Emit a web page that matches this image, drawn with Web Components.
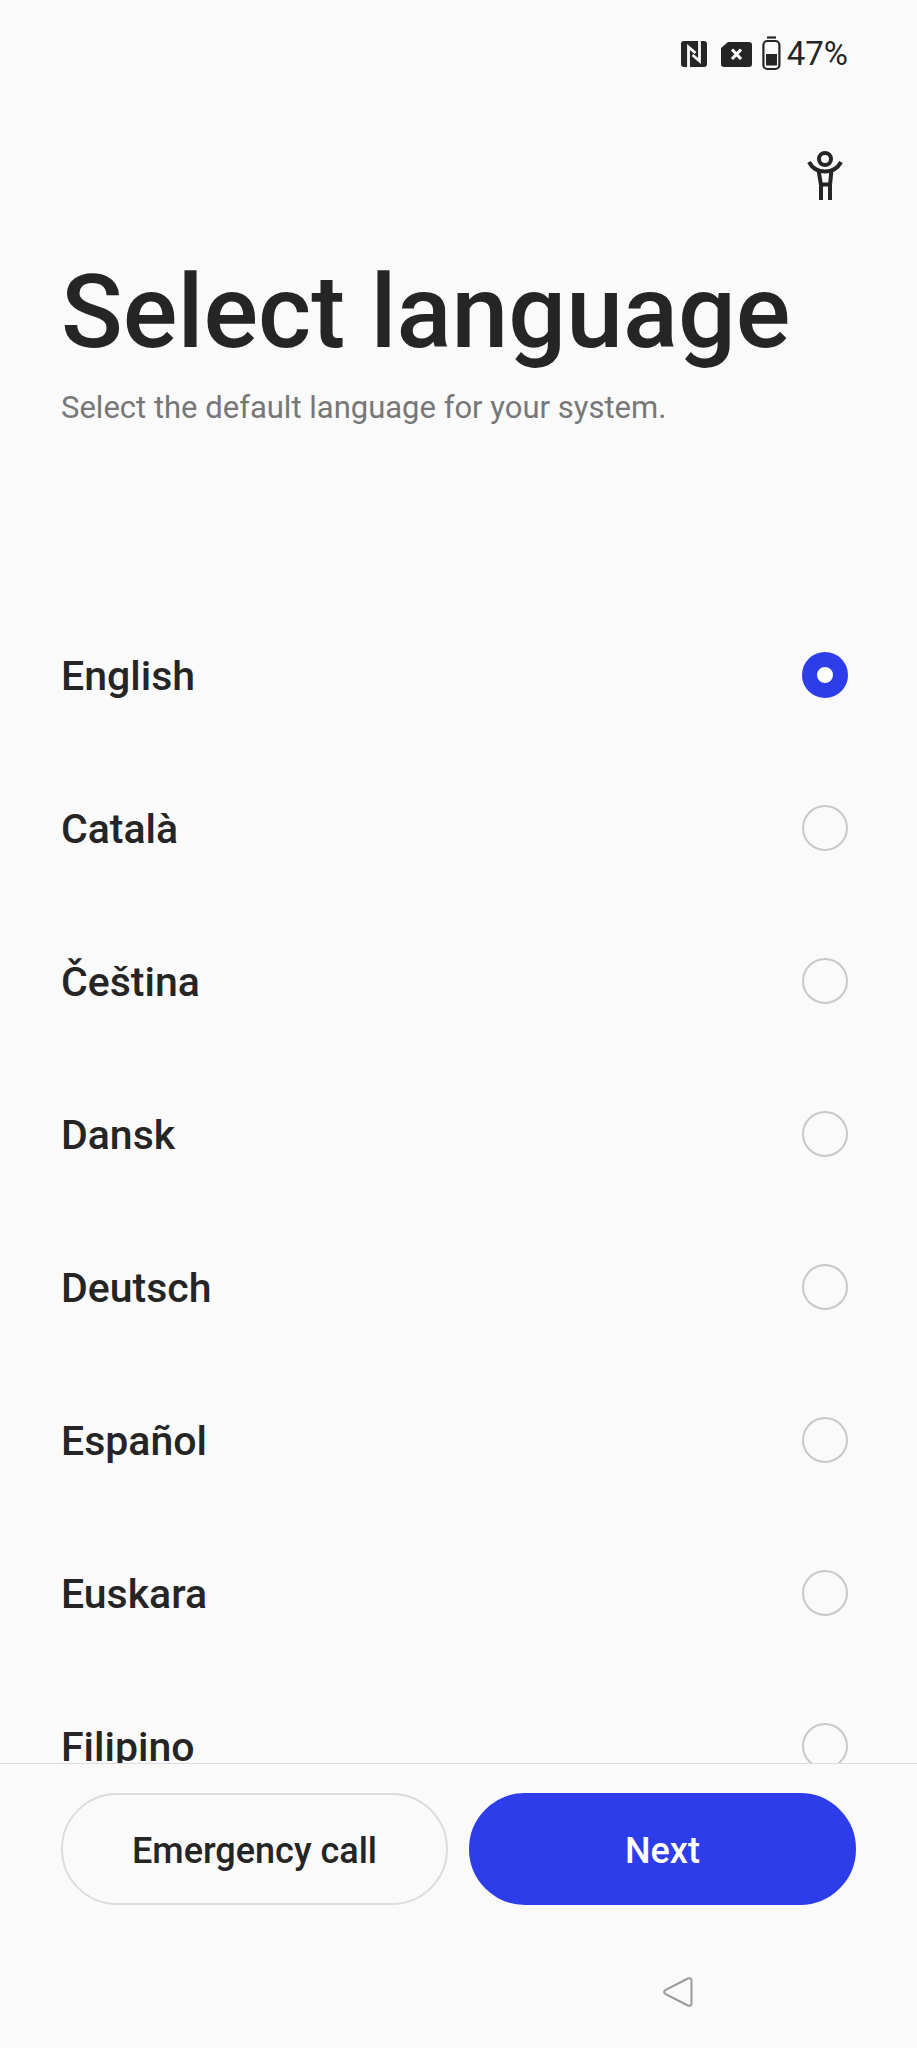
<!DOCTYPE html>
<html lang="en">
<head>
<meta charset="utf-8">
<meta name="viewport" content="width=device-width, initial-scale=1">
<title>Select language</title>
<style>
  :root {
    --bg: #fafafa;
    --ink: #252525;
    --muted: #777777;
    --line: #dcdcdc;
    --ring: #c8c8c8;
    --accent: #2e3dea;
    --gutter: 61px;
  }
  body {
    margin: 0;
    background: var(--bg);
    color: var(--ink);
    font-family: Roboto, "Liberation Sans", sans-serif;
  }
</style>
</head>
<body>
<setup-screen>
  <status-bar slot="status" level="47"></status-bar>
  <page-header slot="header">
    <span slot="title">Select language</span>
    <span slot="description">Select the default language for your system.</span>
  </page-header>
  <language-list languages="English,Català,Čeština,Dansk,Deutsch,Español,Euskara,Filipino" selected="English"></language-list>
  <action-bar slot="footer">
    <pill-button>Emergency call</pill-button>
    <pill-button primary>Next</pill-button>
  </action-bar>
  <nav-bar slot="footer"></nav-bar>
</setup-screen>

<script>
  class BaseElement extends HTMLElement {
    connectedCallback() {
      if (this.shadowRoot) return;
      this.attachShadow({ mode: "open" }).innerHTML = this.render();
    }
  }

  customElements.define("setup-screen", class extends BaseElement {
    render() {
      return `
        <style>
          :host { display: flex; flex-direction: column; height: 100vh; }
          main { flex: 1; min-height: 0; overflow-y: auto; scrollbar-width: none; }
        </style>
        <slot name="status"></slot>
        <slot name="header"></slot>
        <main><slot></slot></main>
        <slot name="footer"></slot>`;
    }
  });

  customElements.define("status-bar", class extends BaseElement {
    render() {
      return `
        <style>
          :host {
            display: flex; justify-content: flex-end; align-items: center;
            height: 108px; padding-right: 69px; box-sizing: border-box;
            font-size: 33px; line-height: 40px;
          }
          svg { display: block; }
          .nfc { margin-right: 14px; }
          .sim { margin-right: 10px; }
          .battery { margin-right: 6px; }
        </style>
        <svg class="nfc" width="26" height="36" viewBox="0 0 26 36" aria-hidden="true">
          <rect y="5" width="26" height="26" rx="3" fill="#252525"/>
          <path d="M7.500 31V11L14.500 17M18.500 5V25L11.500 19" fill="none" stroke="#fafafa" stroke-width="2.800"/>
        </svg>
        <svg class="sim" width="31" height="36" viewBox="0 0 31 36" aria-hidden="true">
          <path d="M7 6H28Q31 6 31 9V28Q31 31 28 31H3Q0 31 0 28V12Z" fill="#252525"/>
          <path d="M11 13.500L20 23M20 13.500L11 23" stroke="#fafafa" stroke-width="3.200"/>
        </svg>
        <svg class="battery" width="19" height="36" viewBox="0 0 19 36" aria-hidden="true">
          <path d="M5 1.500H14" stroke="#252525" stroke-width="2.200"/>
          <rect x="1.400" y="5" width="16" height="28" rx="4" fill="none" stroke="#252525" stroke-width="2.200"/>
          <rect x="4" y="18" width="11" height="11.500" fill="#252525"/>
        </svg>
        <span>${this.getAttribute("level")}%</span>`;
    }
  });

  customElements.define("page-header", class extends BaseElement {
    render() {
      return `
        <style>
          :host { display: block; padding: 0 69px 172px var(--gutter); }
          .tools { display: flex; justify-content: flex-end; align-items: center; height: 136px; margin-bottom: 8px; }
          button { border: 0; padding: 0; background: none; color: inherit; }
          svg { display: block; }
          h1 { margin: 0 0 18px; font-size: 102px; line-height: 120px; font-weight: 500; }
          p { margin: 0; font-size: 31px; line-height: 36px; color: var(--muted); }
        </style>
        <div class="tools">
          <button type="button" aria-label="Accessibility">
            <svg width="46" height="50" viewBox="0 0 46 50" fill="none" stroke="#252525" stroke-width="4">
              <circle cx="23" cy="8" r="6"/>
              <path d="M7 11Q12 20.500 23 20.500T39 11"/>
              <path d="M16.500 19L19 34V49M29.500 19L28 34V49M19 33.500H28"/>
            </svg>
          </button>
        </div>
        <h1><slot name="title"></slot></h1>
        <p><slot name="description"></slot></p>`;
    }
  });

  customElements.define("language-list", class extends BaseElement {
    render() {
      const selected = this.getAttribute("selected");
      const rows = this.getAttribute("languages").split(",").map((name, i) => `
        <label for="lang-${i}">
          <span>${name}</span>
          <input type="radio" name="language" id="lang-${i}" value="${name}"${name === selected ? " checked" : ""}>
        </label>`).join("");
      return `
        <style>
          :host { display: block; }
          label {
            display: flex; justify-content: space-between; align-items: center;
            height: 153px; padding: 0 69px 0 var(--gutter);
            font-size: 41px; line-height: 48px; font-weight: 500;
          }
          span { padding-top: 3px; }
          input {
            appearance: none; margin: 0; width: 46px; height: 46px; box-sizing: border-box;
            border: 2px solid var(--ring); border-radius: 50%;
          }
          input:checked { border: 15px solid var(--accent); background: #fff; }
        </style>
        <div role="radiogroup" aria-label="Language">${rows}</div>`;
    }
  });

  customElements.define("action-bar", class extends BaseElement {
    render() {
      return `
        <style>
          :host {
            display: grid; grid-template-columns: 1fr 1fr; gap: 21px;
            padding: 29px var(--gutter) 31px; border-top: 1px solid var(--line);
          }
        </style>
        <slot></slot>`;
    }
  });

  customElements.define("pill-button", class extends BaseElement {
    render() {
      return `
        <style>
          :host { display: block; }
          button {
            display: block; width: 100%; height: 112px; box-sizing: border-box;
            padding: 3px 24px 0; border: 2px solid var(--line); border-radius: 56px;
            background: none; color: inherit; font: 500 36px/44px Roboto, "Liberation Sans", sans-serif;
          }
          :host([primary]) button { border-color: var(--accent); background: var(--accent); color: #fff; }
        </style>
        <button type="button"><slot></slot></button>`;
    }
  });

  customElements.define("nav-bar", class extends BaseElement {
    render() {
      return `
        <style>
          :host {
            display: grid; grid-template-columns: repeat(3, 1fr); place-items: center;
            height: 112px; padding: 0 130px;
          }
          button { grid-column: 3; border: 0; padding: 0; background: none; }
          svg { display: block; }
        </style>
        <button type="button" aria-label="Back">
          <svg width="30" height="30" viewBox="0 0 30 30" fill="none" stroke="#999" stroke-width="2">
            <path d="M2.200 13.200L24.800 1.500Q28.500 0.500 28.500 4V26Q28.500 29.500 24.800 28.500L2.200 16.800Q0 15 2.200 13.200Z"/>
          </svg>
        </button>`;
    }
  });
</script>
</body>
</html>
